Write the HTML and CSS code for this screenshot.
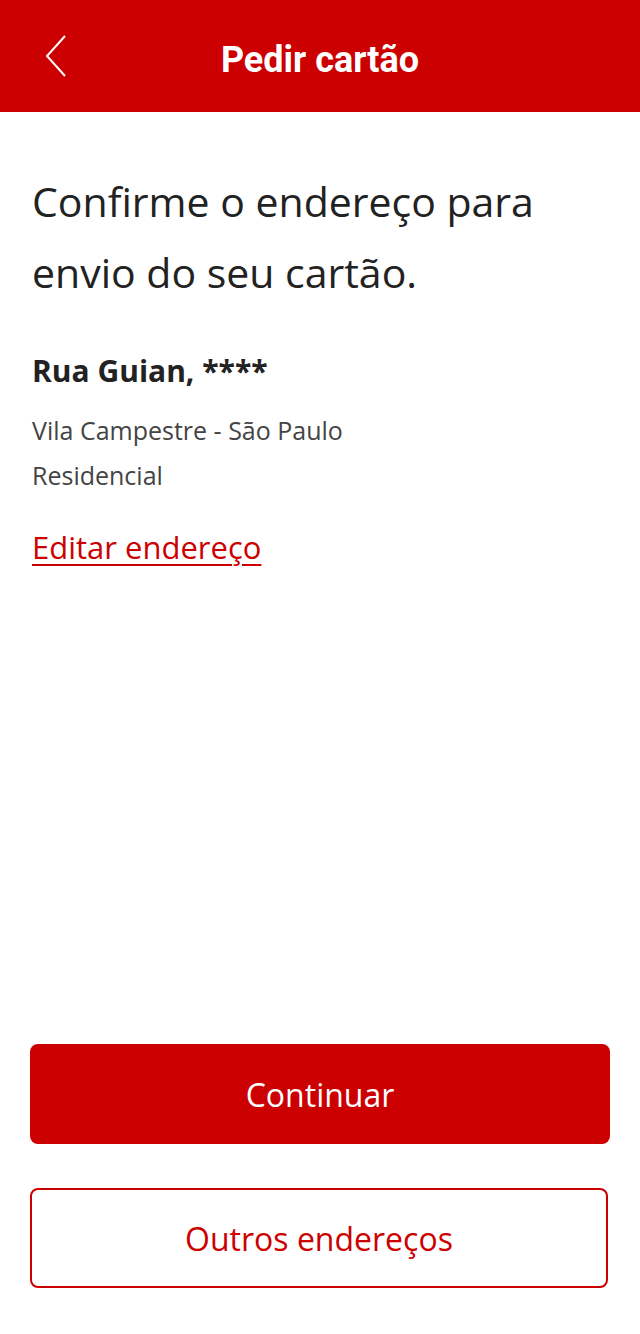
FILE: index.html
```html
<!DOCTYPE html>
<html lang="pt-BR">
<head>
    <meta charset="UTF-8">
    <meta name="viewport" content="width=device-width, initial-scale=1.0">
    <title>Pedir cartão</title>
    <link rel="stylesheet" href="styles.css">
</head>
<body>
    <div class="screen">
        <header class="topbar">
            <a class="back" href="#" aria-label="Voltar">
                <svg width="24" height="44" viewBox="0 0 24 44">
                    <polyline points="21,3 3,23 21,43" fill="none" stroke="#fff" stroke-width="2"/>
                </svg>
            </a>
            <h1>Pedir cartão</h1>
        </header>

        <main class="content">
            <h2>Confirme o endereço para envio do seu cartão.</h2>

            <div class="address">
                <p class="street">Rua Guian, ****</p>
                <p class="detail">Vila Campestre - São Paulo</p>
                <p class="detail">Residencial</p>
            </div>

            <a class="edit-link" href="#">Editar endereço</a>
        </main>

        <div class="actions">
            <button class="btn btn-primary">Continuar</button>
            <button class="btn btn-outline">Outros endereços</button>
        </div>
    </div>
</body>
</html>
```

FILE: styles.css
```css
* {
    margin: 0;
    padding: 0;
    box-sizing: border-box;
}

body {
    font-family: "Open Sans", "Noto Sans", sans-serif;
    background: #fff;
    color: #222;
}

.screen {
    min-height: 1334px;
    display: flex;
    flex-direction: column;
}

.topbar {
    height: 112px;
    background-color: #cc0000;
    display: flex;
    align-items: center;
    justify-content: center;
    position: relative;
}

.back {
    position: absolute;
    left: 44px;
    top: 33px;
    display: block;
    line-height: 0;
}

.topbar h1 {
    color: #fff;
    font-family: Roboto, "Liberation Sans", sans-serif;
    font-size: 36px;
    font-weight: bold;
    margin-top: 8px;
}

.content {
    padding: 0 32px;
    flex: 1;
}

.content h2 {
    font-size: 41px;
    font-weight: normal;
    line-height: 71px;
    color: #222;
    margin-top: 54px;
}

.address {
    margin-top: 43px;
}

.street {
    font-size: 30px;
    font-weight: bold;
    line-height: 40px;
    color: #222;
    margin-bottom: 17px;
}

.detail {
    font-size: 25px;
    line-height: 45px;
    color: #444;
}

.edit-link {
    display: inline-block;
    margin-top: 28px;
    font-size: 31px;
    line-height: 42px;
    color: #cc0000;
    text-decoration: underline;
    text-underline-offset: 5px;
    text-decoration-thickness: 2px;
}

.actions {
    padding: 0 30px 46px;
    display: flex;
    flex-direction: column;
    gap: 44px;
}

.btn {
    width: 100%;
    height: 100px;
    border-radius: 8px;
    font-family: "Open Sans", "Noto Sans", sans-serif;
    font-size: 32px;
    cursor: pointer;
}

.btn-primary {
    background-color: #cc0000;
    border: none;
    color: #fff;
}

.btn-outline {
    background: #fff;
    border: 2px solid #cc0000;
    color: #cc0000;
    width: 578px;
}
```
